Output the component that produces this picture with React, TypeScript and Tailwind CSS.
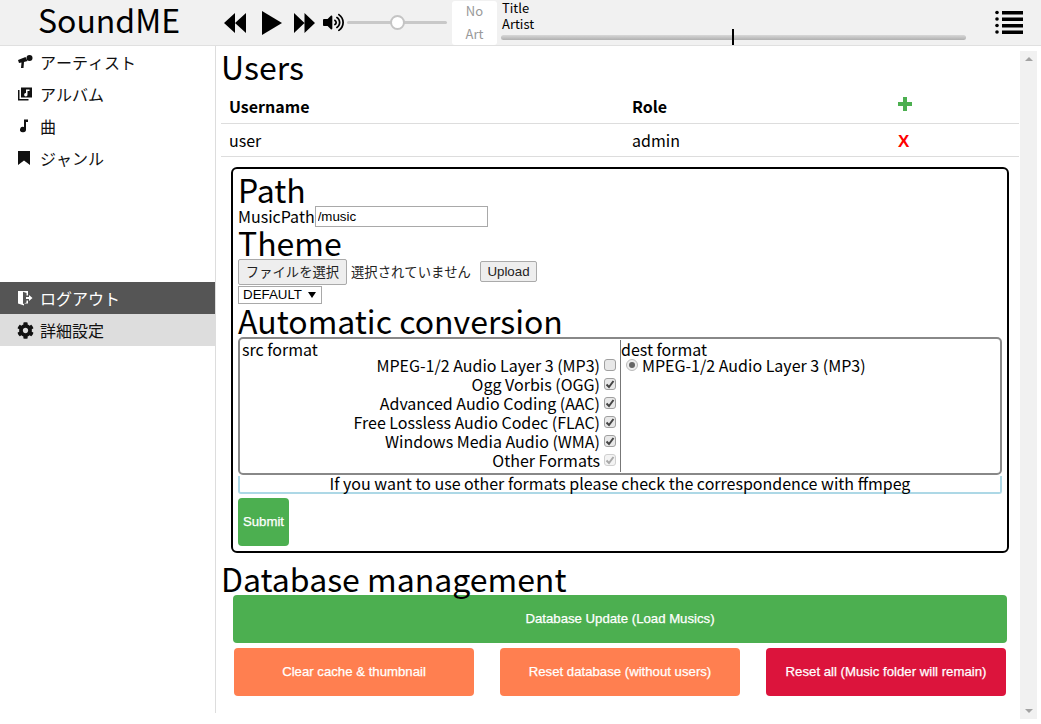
import React from 'react'
import { FaCog, FaVolumeUp } from 'react-icons/fa'

const sans = 'font-["Noto_Sans_CJK_JP","Noto_Sans",sans-serif]'
const arial = 'font-["Liberation_Sans","Noto_Sans_CJK_JP",sans-serif]'

function MicIcon() {
  return (
    <svg width="16" height="16" viewBox="0 0 16 16" fill="currentColor">
      <circle cx="12.500" cy="4" r="3" />
      <path d="M1 6 L8.500 3 L10.500 7 L7 8 L6.500 14 L4 14 L4.500 8.500 L2 9 Z" />
    </svg>
  )
}

function AlbumIcon() {
  return (
    <svg width="16" height="16" viewBox="0 0 16 16" fill="currentColor">
      <path d="M1 4 H2.500 V13 H11.500 V14.500 H1 Z" />
      <path fillRule="evenodd" d="M4 1.500 H15 V11.500 H4 Z M9 3.500 V7 A1.700 1.700 0 1 0 10.500 8.500 V5 H12.500 V3.500 Z" />
    </svg>
  )
}

function NoteIcon() {
  return (
    <svg width="16" height="16" viewBox="0 0 16 16" fill="currentColor">
      <path d="M7 1.500 H11 V4 H9 V11.500 A3 2.700 0 1 1 7 9 Z" />
    </svg>
  )
}

function BookmarkIcon() {
  return (
    <svg width="16" height="16" viewBox="0 0 16 16" fill="currentColor">
      <path d="M1 1 H13 V15 L7 10.500 L1 15 Z" />
    </svg>
  )
}

function LogoutIcon() {
  return (
    <svg width="16" height="16" viewBox="0 0 16 16" fill="currentColor">
      <path d="M1 1 H11 V5.500 H9.500 V3 L6 1.800 V14 L9.500 12.500 V10.500 H11 V13.500 H7 V15.500 L1 13.500 Z" />
      <path d="M9 7 H12 V5 L15.500 8 L12 11 V9 H9 Z" />
    </svg>
  )
}

function NavItem({ icon, label, className = '' }: { icon: React.ReactNode; label: string; className?: string }) {
  return (
    <div className={`flex h-8 items-center pl-[17px] text-[16px] [font-kerning:none] ${className}`}>
      <span className="flex w-[23px] shrink-0">{icon}</span>
      <span>{label}</span>
    </div>
  )
}

function Check({ checked = false, disabled = false }: { checked?: boolean; disabled?: boolean }) {
  return (
    <span
      className={`ml-[4px] flex h-3 w-3 shrink-0 items-center justify-center rounded-[3px] border ${
        disabled ? 'border-[#d0d0d0] bg-[#f3f3f3]' : 'border-[#a0a0a0] bg-[#e8e8e8]'
      }`}
    >
      {checked && (
        <svg width="10" height="10" viewBox="0 0 10 10" fill="none" stroke={disabled ? '#a8a8a8' : '#444'} strokeWidth="2">
          <path d="M1.500 5.500 L4 8 L8.500 2" />
        </svg>
      )}
    </span>
  )
}

const srcFormats = [
  { label: 'MPEG-1/2 Audio Layer 3 (MP3)', checked: false },
  { label: 'Ogg Vorbis (OGG)', checked: true },
  { label: 'Advanced Audio Coding (AAC)', checked: true },
  { label: 'Free Lossless Audio Codec (FLAC)', checked: true },
  { label: 'Windows Media Audio (WMA)', checked: true },
  { label: 'Other Formats', checked: true, disabled: true },
]

function Header() {
  return (
    <header className="flex h-[46px] items-stretch border-b border-[#e0e0e0] bg-[#f1f1f1]">
      <div className="flex w-[218px] shrink-0 items-center justify-center pb-[7px] text-[32px] leading-[38px]">SoundME</div>

      {/* player controls */}
      <div className="flex items-center pl-[6px]">
        <svg width="22" height="22" viewBox="0 0 22 22" fill="currentColor">
          <path d="M11 1 V21 L0 11 Z M22 1 V21 L11 11 Z" />
        </svg>
        <svg className="ml-[16px]" width="20" height="24" viewBox="0 0 20 24" fill="currentColor">
          <path d="M0 0 L20 12 L0 24 Z" />
        </svg>
        <svg className="ml-[12px]" width="21" height="22" viewBox="0 0 21 22" fill="currentColor">
          <path d="M0 1 L10.500 11 L0 21 Z M10.500 1 L21 11 L10.500 21 Z" />
        </svg>
        <FaVolumeUp className="ml-[8px] text-[21px]" />
        <div className="relative ml-[3px] h-[3px] w-[100px] rounded-full bg-[#c8c8c8]">
          <span className="absolute left-[43px] top-[-6px] h-[15px] w-[15px] rounded-full border-2 border-[#c4c4c4] bg-white" />
        </div>
      </div>

      <div className={`my-[1px] ml-[5px] flex h-[44px] w-[45px] flex-col items-center justify-between rounded-[3px] bg-white pb-[1px] text-[13px] leading-[20px] text-[#999] ${sans}`}>
        <span>No</span>
        <span>Art</span>
      </div>

      {/* now playing */}
      <div className="ml-[4px] flex w-[465px] flex-col text-[13px] leading-[16px]">
        <span className="pl-[1px]">Title</span>
        <span className="pl-[1px]">Artist</span>
        <div className="relative mt-[3px] h-[5px] rounded-full bg-gradient-to-b from-[#d8d8d8] to-[#b0b0b0]">
          <span className="absolute left-[231px] top-[-6px] h-4 w-[2px] bg-black" />
        </div>
      </div>

      <div className="flex flex-1 items-center pb-[1px] pl-[29px]">
        <svg width="28" height="25" viewBox="0 0 28 25" fill="currentColor">
          <circle cx="2" cy="2.500" r="1.800" />
          <circle cx="2" cy="9" r="1.800" />
          <circle cx="2" cy="15.500" r="1.800" />
          <circle cx="2" cy="22" r="1.800" />
          <path d="M7 1 H28 V4.500 H7 Z M7 7.500 H28 V11 H7 Z M7 14 H28 V17.500 H7 Z M7 20.500 H28 V24 H7 Z" />
        </svg>
      </div>
    </header>
  )
}

function Sidebar() {
  return (
    <aside className="flex h-[667px] w-[216px] shrink-0 flex-col border-r border-[#ddd] text-[#111]">
      <NavItem icon={<MicIcon />} label="アーティスト" />
      <NavItem icon={<AlbumIcon />} label="アルバム" />
      <NavItem icon={<NoteIcon />} label="曲" />
      <NavItem icon={<BookmarkIcon />} label="ジャンル" />
      <div className="h-[108px]" />
      <NavItem icon={<LogoutIcon />} label="ログアウト" className="bg-[#555] text-white" />
      <NavItem icon={<FaCog className="text-[17px]" />} label="詳細設定" className="bg-[#ddd]" />
    </aside>
  )
}

function UsersTable() {
  return (
    <table className="ml-[5px] w-[798px] table-fixed border-collapse text-[16px]">
      <tbody>
        <tr className="h-[34px] border-b border-[#ddd]">
          <th className="w-[403px] pl-2 text-left font-bold">Username</th>
          <th className="w-[266px] pl-2 text-left font-bold">Role</th>
          <th className="pl-2 text-left text-[#4caf50]">
            <svg className="mb-[4px]" width="14" height="14" viewBox="0 0 14 14" fill="currentColor">
              <path d="M5 0 H9 V5 H14 V9 H9 V14 H5 V9 H0 V5 H5 Z" />
            </svg>
          </th>
        </tr>
        <tr className="h-[33px] border-b border-[#ddd]">
          <td className="pl-2">user</td>
          <td className="pl-2">admin</td>
          <td className={`pl-2 pt-[5px] text-[17px] leading-[20px] font-bold text-[#f00] ${arial}`}>X</td>
        </tr>
      </tbody>
    </table>
  )
}

function SettingsForm() {
  return (
    <form className="ml-[15px] mt-[10px] h-[386px] w-[778px] rounded-[6px] border-2 border-black px-[5px] text-[16px]">
      <h2 className="h-[38px] pt-[1px] text-[32px] font-normal leading-[38px]">Path</h2>
      <div className="flex h-[19px] items-center">
        <span>MusicPath</span>
        <input
          defaultValue="/music"
          className={`h-[21px] w-[173px] border border-[#a9a9a9] px-[2px] text-[13.33px] ${arial}`}
        />
      </div>
      <h2 className="h-[33px] text-[32px] font-normal leading-[32px]">Theme</h2>
      <div className={`flex h-[26px] items-center text-[13.33px] [font-kerning:none] ${sans}`}>
        <button type="button" className="h-[26px] w-[109px] rounded-[2px] border border-[#aaa] bg-[#eee] text-[#222]">
          ファイルを選択
        </button>
        <span className="ml-[4px] w-[129px] whitespace-nowrap text-[#222]">選択されていません</span>
        <button type="button" className={`h-[21px] w-[57px] rounded-[2px] border border-[#aaa] bg-[#eee] text-[#222] ${arial}`}>
          Upload
        </button>
      </div>
      <div className={`mt-[1px] flex h-[18px] w-[84px] items-center border border-[#a9a9a9] pl-[4px] text-[13.33px] ${arial}`}>
        DEFAULT
        <svg className="ml-[6px]" width="8" height="6" viewBox="0 0 8 6" fill="currentColor">
          <path d="M0 0 H8 L4 6 Z" />
        </svg>
      </div>
      <h2 className="h-[33px] text-[32px] font-normal leading-[32px]">Automatic conversion</h2>

      <div className="flex h-[138px] w-[764px] rounded-[5px] border-2 border-[#888] py-[1px] pl-[2px]">
        <div className="w-[379px] border-r border-[#777] pr-[4px] leading-[19px]">
          <div className="h-[16px]">src format</div>
          {srcFormats.map(f => (
            <div key={f.label} className="flex h-[19px] items-center justify-end">
              <span>{f.label}</span>
              <Check checked={f.checked} disabled={f.disabled} />
            </div>
          ))}
        </div>
        <div className="leading-[19px]">
          <div className="h-[16px]">dest format</div>
          <div className="flex h-[19px] items-center pl-[5px]">
            <span className="mr-[4px] flex h-3 w-3 items-center justify-center rounded-full border border-[#bbb] bg-[#eee]">
              <span className="h-[6px] w-[6px] rounded-full bg-[#666]" />
            </span>
            MPEG-1/2 Audio Layer 3 (MP3)
          </div>
        </div>
      </div>

      <div className="mt-[1px] h-[18px] w-[764px] rounded-b-[3px] border-x-2 border-b-2 border-[#add8e6] text-center leading-[14px]">
        If you want to use other formats please check the correspondence with ffmpeg
      </div>
      <button type="button" className={`mt-[4px] block h-12 w-[51px] rounded-[4px] bg-[#4caf50] pt-[1px] text-[13.2px] font-normal text-white [-webkit-text-stroke:0.25px_white] ${arial}`}>
        Submit
      </button>
    </form>
  )
}

function ActionButton({ label, className }: { label: string; className: string }) {
  return (
    <button type="button" className={`h-12 rounded-[4px] pt-[1px] text-[13.2px] font-normal text-white [-webkit-text-stroke:0.25px_white] ${arial} ${className}`}>
      {label}
    </button>
  )
}

export default function App() {
  return (
    <div className={`h-[724px] w-[1041px] overflow-hidden bg-white text-black ${sans}`}>
      <Header />
      <div className="flex">
        <Sidebar />
        <main className="w-[804px] shrink-0">
          <h1 className="h-[43px] pl-[5px] text-[32px] font-normal leading-[40px]">Users</h1>
          <UsersTable />
          <SettingsForm />
          <h2 className="mt-[9px] h-[33px] pl-[5px] text-[32px] font-normal leading-[32px]">Database management</h2>
          <div className="pl-[17px]">
            <ActionButton label="Database Update (Load Musics)" className="block w-[774px] bg-[#4caf50]" />
            <div className="mt-[5px] flex w-[774px] justify-between px-[1px]">
              <ActionButton label="Clear cache & thumbnail" className="w-[240px] bg-[#ff7f50]" />
              <ActionButton label="Reset database (without users)" className="w-[240px] bg-[#ff7f50]" />
              <ActionButton label="Reset all (Music folder will remain)" className="w-[240px] bg-[#dc143c]" />
            </div>
          </div>
        </main>
        {/* scrollbar */}
        <div className="mt-[5px] flex h-[668px] w-[17px] shrink-0 flex-col items-center justify-between bg-[#f1f1f1] py-[6px]">
          <svg width="8" height="4" viewBox="0 0 8 4" fill="#a3a3a3"><path d="M4 0 L8 4 H0 Z" /></svg>
          <svg width="8" height="4" viewBox="0 0 8 4" fill="#a3a3a3"><path d="M0 0 H8 L4 4 Z" /></svg>
        </div>
      </div>
    </div>
  )
}
